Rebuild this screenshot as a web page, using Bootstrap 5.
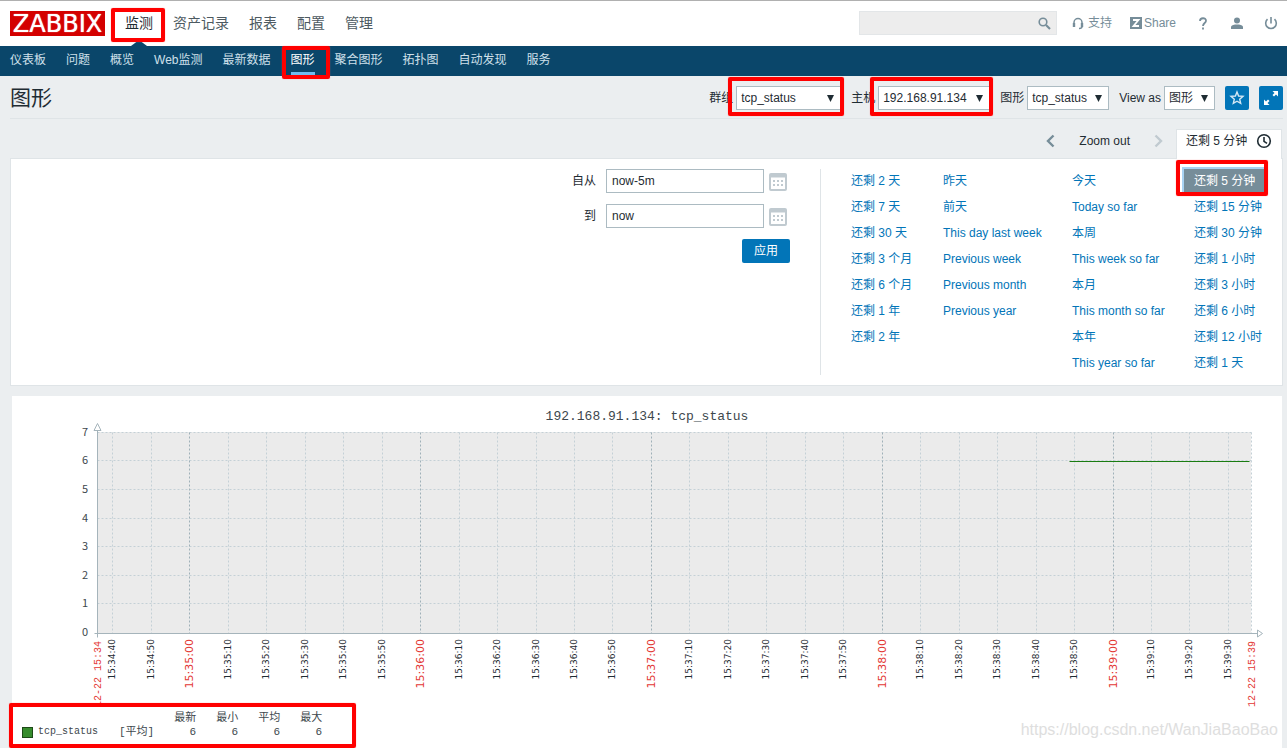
<!DOCTYPE html>
<html lang="zh-CN">
<head>
<meta charset="utf-8">
<meta name="viewport" content="width=device-width, initial-scale=1">
<title>图形</title>
<link rel="stylesheet" href="https://cdn.jsdelivr.net/npm/bootstrap@5.3.0/dist/css/bootstrap.min.css">
<style>
  :root { --ink: #1f2c33; --blue: #0275b8; --navy: #0a466a; --slate: #768d99; --line: #dfe4e7; --field: #acbbc2; }
  body { font: 12px/18px "Liberation Sans", "Noto Sans CJK SC", sans-serif; color: var(--ink); background: #ebeef0; }
  a { text-decoration: none; color: var(--blue); }
  svg { display: block; }
  .topbar { height: 46px; border-top: 1px solid #b0b0b0; padding: 0 9px 1px 10px; }
  .logo { background: #d40000; color: #fff; font: 24px/26px "DejaVu Sans", sans-serif; width: 95px; height: 25px; text-shadow: 0 0 1px #fff; }
  .main-menu { margin-left: 10px; }
  .main-menu a { font-size: 14px; line-height: 45px; padding: 0 10px; color: #4d5a61; display: block; }
  .main-menu a.active { color: var(--ink); position: relative; }
  .main-menu a.active::before { content: ""; position: absolute; bottom: 0; left: 50%; margin-left: -8px; border: 8px solid transparent; border-top: 0; border-bottom: 6px solid var(--navy); }
  .search-box { width: 198px; height: 24px; background: #ededed; border: 1px solid #e3e6e8; }
  .search-box input { background: none; border: 0; outline: 0; height: 22px; min-width: 0; }
  .search-box button { background: none; border: 0; padding: 0 5px; }
  .tools { color: var(--slate); margin-left: 15px; }
  .tools a { color: var(--slate); }
  .tools .share { margin-left: 18px; }
  .tools .tool-icon { margin-left: 23px; }
  .tools .tool-off { margin-left: 20px; }
  .submenu { background: var(--navy); height: 30px; padding-left: 10px; gap: 20px; }
  .submenu a { color: #cfe0ea; line-height: 29px; display: block; height: 29px; }
  .submenu a.active { color: #fff; border-bottom: 3px solid #6fbcf0; }
  .page-head { height: 43px; margin: 0 4px 0 10px; padding-top: 2px; border-bottom: 1px solid var(--line); }
  .page-head h1 { font-size: 21px; line-height: 40px; margin: 0; font-weight: 400; }
  .filters { gap: 10px; }
  .filters label { margin-right: 3px; }
  .filters select { height: 24px; border: 1px solid var(--field); border-radius: 0; padding: 0 4px; color: var(--ink); appearance: none;
    background: #fff url("data:image/svg+xml,%3Csvg xmlns='http://www.w3.org/2000/svg' width='7' height='7'%3E%3Cpath d='M0 0h7L3.500 7z' fill='%231f2c33'/%3E%3C/svg%3E") no-repeat right 6px center; }
  .w-group { width: 105px; } .w-host { width: 112px; } .w-graph { width: 82px; } .w-view { width: 51px; }
  .icon-btn { width: 24px; height: 24px; padding: 4px; border: 0; border-radius: 2px; background: var(--blue); }
  .range-bar { margin: 10px 5px 0 10px; height: 29px; }
  .range-bar button { border: 0; background: none; padding: 0 0 6px; color: var(--ink); }
  .range-bar .next { margin-right: 13px; }
  .range-tab { width: 106px; height: 30px; border: 1px solid var(--line); border-bottom: 0; background: #fff; color: var(--ink); position: relative; padding: 0 9px; line-height: 22px; }
  .range-tab svg { margin-top: 3px; }
  .range-panel { margin: 0 4px 10px 10px; padding: 10px 0; border: 1px solid var(--line); background: #fff; }
  .range-form { gap: 11px; padding-right: 30px; }
  .range-form label { margin-right: 6px; }
  .range-form input { width: 158px; height: 24px; border: 1px solid var(--field); padding: 0 5px; color: var(--ink); }
  .range-form .cal { border: 0; background: none; padding: 2px 0 0 1px; width: 22px; }
  .apply { width: 48px; height: 24px; border: 0; border-radius: 2px; background: var(--blue); color: #fff; padding: 0; }
  .quick { border-left: 1px solid var(--line); padding: 0 10px 0 20px; }
  .quick ul { gap: 2px; margin: 0; width: 92px; }
  .quick ul.wide { width: 129px; } .quick ul.mid { width: 122px; } .quick ul.slim { width: 88px; }
  .quick a { line-height: 24px; padding: 0 10px; display: inline-block; white-space: nowrap; vertical-align: top; }
  .quick a.selected { background: var(--slate); color: #fff; box-shadow: 0 0 0 2px #a8d3f3; }
  .graph { margin: 0 5px 0 12px; background: #fff; position: relative; flex: 1 0 auto; }
  .graph svg { width: 100%; height: 315px; }
  .graph svg text { fill: #3d474d; }
  .mono, .legend { font-family: "Liberation Mono", "Noto Sans CJK SC", monospace; }
  .plot-title { font-size: 13px; }
  .ylab { font-family: "Noto Sans CJK SC", sans-serif; font-size: 11px; }
  .xlab, .xlab-main { font-family: "DejaVu Sans", sans-serif; font-size: 9px; }
  .xlab-main { font-size: 11px; }
  .xdate { font-size: 10px; }
  .graph svg .xlab { fill: var(--ink); }
  .graph svg .xlab-main, .graph svg .xdate { fill: #e33734; }
  .legend { font-size: 10px; line-height: 14px; color: #3d474d; margin: 0 0 9px 10px; }
  .legend th { font-weight: 400; }
  .legend th, .legend td { padding: 0; text-align: right; width: 42px; height: 14px; white-space: nowrap; }
  .legend .cjk { font-size: 11px; }
  .legend .item-name { width: 97px; text-align: left; padding-left: 16px; position: relative; }
  .legend .item-fn { width: 34px; text-align: left; }
  .swatch { position: absolute; left: 0; top: 2px; width: 11px; height: 11px; background: #368c2d; border: 1px solid #1c4a17; }
  .watermark { position: absolute; right: 4px; bottom: 8px; font-size: 16px; line-height: 20px; color: #dedede; }
  /* red frames drawn over the highlighted controls */
  .framed { position: relative; }
  .framed::after { content: ""; position: absolute; inset: var(--frame); border: 4px solid #f00; border-radius: 2px; pointer-events: none; z-index: 3; box-shadow: 0 0 1px #f66; }
  .frame-menu { --frame: 7px -2px 4px -4px; }
  .frame-sub { --frame: 0 -15px -3px -9px; }
  .frame-select { --frame: -9px -3px -6px -8px; }
  .frame-quick { --frame: -9px -3px -3px -8px; }
  .frame-legend { --frame: -8px -34px -9px -13px; }
</style>
</head>
<body class="d-flex flex-column min-vh-100">
<header>
  <div class="topbar bg-white d-flex align-items-center">
    <a href="#" class="logo d-flex justify-content-center">ZABBIX</a>
    <ul class="main-menu list-unstyled d-flex mb-0">
      <li class="framed frame-menu"><a class="active" href="#">监测</a></li>
      <li><a href="#">资产记录</a></li><li><a href="#">报表</a></li><li><a href="#">配置</a></li><li><a href="#">管理</a></li>
    </ul>
    <form class="search-box d-flex align-items-center ms-auto">
      <input class="flex-grow-1" type="text" aria-label="搜索">
      <button type="button" aria-label="搜索"><svg width="13" height="13" fill="none" stroke="#768d99"><circle cx="5" cy="5" r="3.800" stroke-width="1.600"/><path d="M8 8l4 4" stroke-width="2.200"/></svg></button>
    </form>
    <div class="tools d-flex align-items-center">
      <a href="#" class="d-flex align-items-center"><svg class="me-1" width="12" height="13" fill="none" stroke="#768d99"><path d="M2 8.500V5.500a4 4 0 0 1 8 0v3M10 8v1.500q0 2-3 2" stroke-width="1.500"/><path d="M2 6v4M10 6v4" stroke-width="2.400"/></svg>支持</a>
      <a href="#" class="share d-flex align-items-center"><svg width="14" height="12"><path fill="#768d99" d="M0 0h12v12H0z"/><path d="M3 3h5.500L3.500 9H9" fill="none" stroke="#fff" stroke-width="1.800"/></svg>Share</a>
      <a href="#" aria-label="帮助" class="tool-icon"><svg width="8" height="13" fill="none" stroke="#768d99" stroke-width="1.800"><path d="M1 4C1 .500 7 .300 7 3.700 7 6 4 6 4 9M4 10.500v2"/></svg></a>
      <a href="#" aria-label="用户" class="tool-icon"><svg width="14" height="13" fill="#768d99"><circle cx="7" cy="3.500" r="3"/><path d="M1 12V10q0-2 4-2.600h4q4 .600 4 2.600v2z"/></svg></a>
      <a href="#" aria-label="退出" class="tool-off"><svg width="14" height="13" fill="none" stroke="#768d99" stroke-width="1.600"><path d="M3.500 2.200a5.300 5.300 0 1 0 7 0M7 0v6.500"/></svg></a>
    </div>
  </div>
  <nav>
    <ul class="submenu list-unstyled d-flex mb-0">
      <li><a href="#">仪表板</a></li><li><a href="#">问题</a></li><li><a href="#">概览</a></li><li><a href="#">Web监测</a></li><li><a href="#">最新数据</a></li>
      <li class="framed frame-sub"><a class="active" href="#">图形</a></li>
      <li><a href="#">聚合图形</a></li><li><a href="#">拓扑图</a></li><li><a href="#">自动发现</a></li><li><a href="#">服务</a></li>
    </ul>
  </nav>
</header>
<div class="page-head d-flex justify-content-between align-items-center">
  <h1>图形</h1>
  <form class="filters d-flex align-items-center">
    <div class="d-flex align-items-center"><label for="group">群组</label><span class="framed frame-select d-flex"><select id="group" class="w-group"><option>tcp_status</option></select></span></div>
    <div class="d-flex align-items-center"><label for="host">主机</label><span class="framed frame-select d-flex"><select id="host" class="w-host"><option>192.168.91.134</option></select></span></div>
    <div class="d-flex align-items-center"><label for="graph">图形</label><select id="graph" class="w-graph"><option>tcp_status</option></select></div>
    <div class="d-flex align-items-center"><label for="view">View as</label><select id="view" class="w-view"><option>图形</option></select></div>
    <button type="button" class="icon-btn" aria-label="收藏"><svg width="16" height="16" fill="none" stroke="#d5e8f5" stroke-width="1.400"><path d="M8 2l1.600 4 4.400.400-3.300 2.800 1 4.200L8 11.200l-3.700 2.200 1-4.200L2 6.400 6.400 6z"/></svg></button>
    <button type="button" class="icon-btn" aria-label="全屏"><svg width="16" height="16" fill="#fff"><path d="M9.500 1H15v5.500l-2-2-2 2L9.500 5l2-2zM6.500 15H1V9.500l2 2 2-2L6.500 11l-2 2z"/></svg></button>
  </form>
</div>
<div class="range-bar d-flex justify-content-end">
  <button type="button" aria-label="向前"><svg width="9" height="14" fill="none" stroke="#768d99" stroke-width="2.400"><path d="M7.500 1.500L2 7l5.500 5.500"/></svg></button>
  <button type="button" class="mx-4">Zoom out</button>
  <button type="button" aria-label="向后" class="next"><svg width="9" height="14" fill="none" stroke="#c0cad0" stroke-width="2.400"><path d="M1.500 1.500L7 7l-5.500 5.500"/></svg></button>
  <a href="#" class="range-tab d-flex justify-content-between">还剩 5 分钟<svg width="16" height="16" fill="none" stroke="#1f2c33" stroke-width="1.600"><circle cx="8" cy="8" r="6.300"/><path d="M8 4v4.300l3 2"/></svg></a>
</div>
<section class="range-panel d-flex justify-content-end">
  <form class="range-form d-flex flex-column align-items-end">
    <div class="d-flex align-items-center gap-1"><label for="from">自从</label><input id="from" type="text" value="now-5m"><button type="button" class="cal" aria-label="选择日期"><svg width="18" height="18"><rect x="1" y="1" width="16" height="16" rx="1" fill="#fff" stroke="#c0cad0" stroke-width="2"/><path d="M1 3h16" stroke="#c0cad0" stroke-width="3"/><path d="M4 8h11M4 12h11" stroke="#c0cad0" stroke-width="2" stroke-dasharray="2 2"/></svg></button></div>
    <div class="d-flex align-items-center gap-1"><label for="to">到</label><input id="to" type="text" value="now"><button type="button" class="cal" aria-label="选择日期"><svg width="18" height="18"><rect x="1" y="1" width="16" height="16" rx="1" fill="#fff" stroke="#c0cad0" stroke-width="2"/><path d="M1 3h16" stroke="#c0cad0" stroke-width="3"/><path d="M4 8h11M4 12h11" stroke="#c0cad0" stroke-width="2" stroke-dasharray="2 2"/></svg></button></div>
    <button type="button" class="apply">应用</button>
  </form>
  <div class="quick d-flex">
    <ul class="list-unstyled d-flex flex-column"><li><a href="#">还剩 2 天</a></li><li><a href="#">还剩 7 天</a></li><li><a href="#">还剩 30 天</a></li><li><a href="#">还剩 3 个月</a></li><li><a href="#">还剩 6 个月</a></li><li><a href="#">还剩 1 年</a></li><li><a href="#">还剩 2 年</a></li></ul>
    <ul class="wide list-unstyled d-flex flex-column"><li><a href="#">昨天</a></li><li><a href="#">前天</a></li><li><a href="#">This day last week</a></li><li><a href="#">Previous week</a></li><li><a href="#">Previous month</a></li><li><a href="#">Previous year</a></li></ul>
    <ul class="mid list-unstyled d-flex flex-column"><li><a href="#">今天</a></li><li><a href="#">Today so far</a></li><li><a href="#">本周</a></li><li><a href="#">This week so far</a></li><li><a href="#">本月</a></li><li><a href="#">This month so far</a></li><li><a href="#">本年</a></li><li><a href="#">This year so far</a></li></ul>
    <ul class="slim list-unstyled d-flex flex-column"><li><a class="selected framed frame-quick" href="#">还剩 5 分钟</a></li><li><a href="#">还剩 15 分钟</a></li><li><a href="#">还剩 30 分钟</a></li><li><a href="#">还剩 1 小时</a></li><li><a href="#">还剩 3 小时</a></li><li><a href="#">还剩 6 小时</a></li><li><a href="#">还剩 12 小时</a></li><li><a href="#">还剩 1 天</a></li></ul>
  </div>
</section>
<main class="graph">
  <svg id="plot" role="img" aria-label="192.168.91.134: tcp_status"></svg>
  <div class="framed frame-legend d-inline-block align-top legend">
    <table>
      <thead><tr><th class="item-name"></th><th class="item-fn"></th><th class="cjk">最新</th><th class="cjk">最小</th><th class="cjk">平均</th><th class="cjk">最大</th></tr></thead>
      <tbody><tr><td class="item-name"><span class="swatch"></span>tcp_status</td><td class="item-fn cjk">[平均]</td><td class="cjk">6</td><td class="cjk">6</td><td class="cjk">6</td><td class="cjk">6</td></tr></tbody>
    </table>
  </div>
  <div class="watermark">https://blog.csdn.net/WanJiaBaoBao</div>
</main>
<script src="https://cdn.jsdelivr.net/npm/bootstrap@5.3.0/dist/js/bootstrap.bundle.min.js"></script>
<script>
  const plot = document.getElementById('plot');
  function draw() {
    const left = 85, top = 36, base = 237, right = plot.clientWidth - 31, width = right - left;
    const line = (x1, y1, x2, y2, color, dash) =>
      `<path d="M${x1 + .5} ${y1 + .5}L${x2 + .5} ${y2 + .5}" fill="none" stroke="${color}"${dash ? ' stroke-dasharray="2 2"' : ''}/>`;
    const upright = (x, y, cls, s) => `<text class="${cls}" text-anchor="end" transform="translate(${x} ${y}) rotate(-90)">${s}</text>`;
    let out = `<rect x="${left}" y="${top}" width="${width}" height="${base - top}" fill="#ebebeb"/>`;
    out += `<text class="mono plot-title" x="50%" y="24" text-anchor="middle" xml:space="preserve">192.168.91.134: tcp_status</text>`;
    for (let v = 0; v <= 7; v++) {
      const y = Math.round(base - 1 - v * 28.6);
      if (v) out += line(left, y, right, y, '#c4d0d6', true);
      out += `<text class="ylab" x="76" y="${y + 4}" text-anchor="end">${v}</text>`;
    }
    // one tick every ten seconds, first at 15:34:40
    for (let i = 0; i < 30; i++) {
      const x = Math.round(left + (4 + i * 10) / 300 * width);
      const t = 34 * 60 + 40 + i * 10, s = String(t % 60).padStart(2, '0');
      const whole = t % 60 === 0;
      out += line(x, top, x, base, whole ? '#9fb0b8' : '#c4d0d6', true);
      out += upright(x + (whole ? 4 : 3), 243, whole ? 'xlab-main' : 'xlab', `15:${Math.floor(t / 60)}:${s}`);
    }
    out += line(right, top, right, base, '#c4d0d6', true);
    out += line(left, 33, left, base + 4, '#a5b4bb') + line(left - 3, base, right + 6, base, '#a5b4bb');
    out += `<path d="M${left - 3} 34.500h7l-3.500-7zM${right + 6.5} ${base - 3}v7l5-3.500z" transform="translate(0 0)" fill="#fff" stroke="#a5b4bb"/>`;
    out += upright(left + 4, 245, 'mono xdate', '12-22 15:34') + upright(right + 4, 245, 'mono xdate', '12-22 15:39');
    out += line(left + Math.round(width * .842), 65, right - 2, 65, '#1a7c11');
    plot.innerHTML = out;
  }
  draw();
  addEventListener('resize', draw);
</script>
</body>
</html>
